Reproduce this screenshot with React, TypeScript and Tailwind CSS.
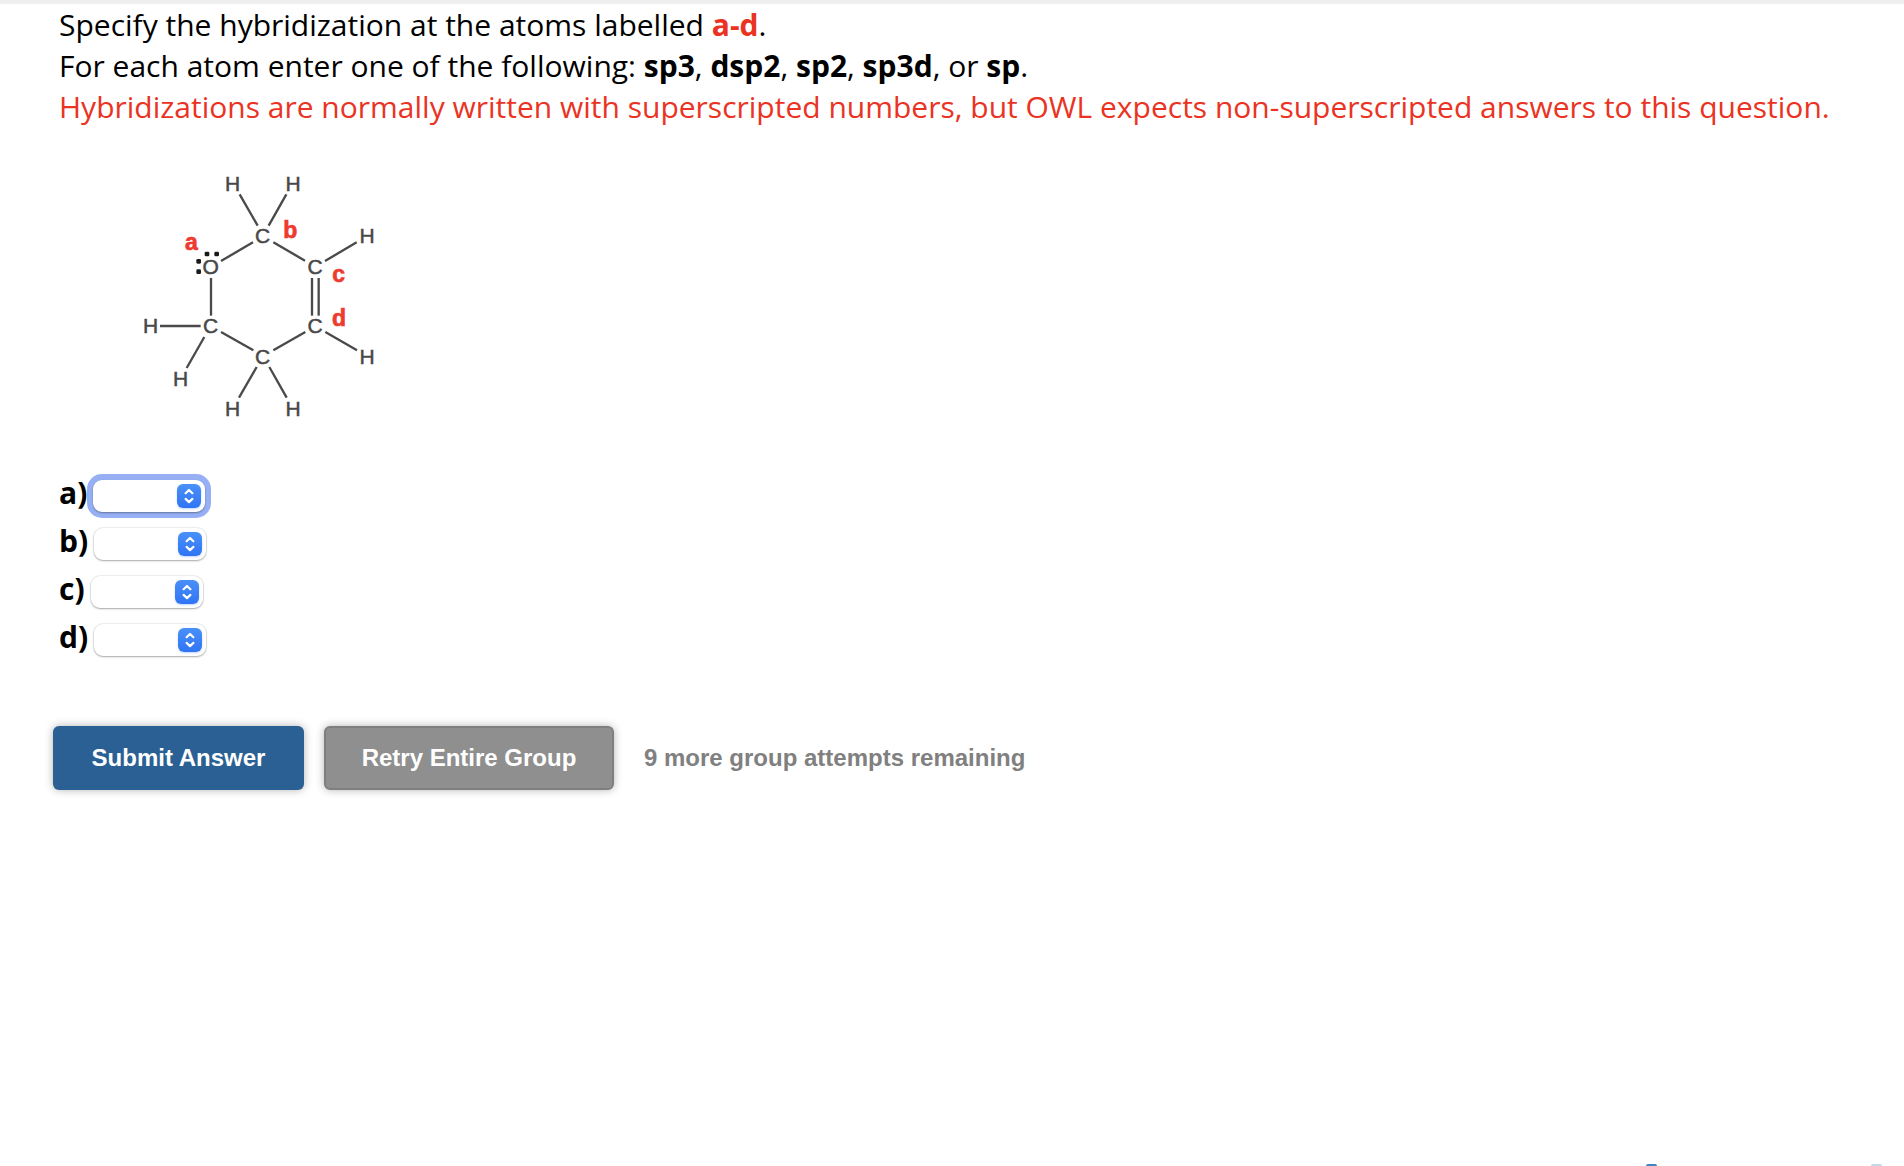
const bonds: number[][] = [
  [329, 103, 383, 197],
  [469, 103, 416, 197],
  [369, 247, 273, 303],
  [430, 247, 525, 302],
  [585, 303, 680, 247],
  [243, 354, 243, 467],
  [546, 354, 546, 467],
  [566, 354, 566, 467],
  [90, 498, 212, 498],
  [273, 516, 370, 571],
  [526, 516, 430, 571],
  [586, 516, 681, 571],
  [223, 531, 170, 624],
  [380, 621, 327, 713],
  [418, 621, 470, 713],
];

const atoms: [string, number, number][] = [
  ["H", 308, 93],
  ["H", 489, 93],
  ["C", 398, 250],
  ["H", 711, 250],
  ["O", 242, 341],
  ["C", 555, 341],
  ["H", 62, 520],
  ["C", 242, 520],
  ["C", 555, 520],
  ["C", 398, 611],
  ["H", 711, 611],
  ["H", 152, 677],
  ["H", 308, 767],
  ["H", 489, 767],
];

const marks: [string, number, number][] = [
  ["a", 184, 270],
  ["b", 481, 234],
  ["c", 626, 366],
  ["d", 627, 498],
];

const lonePairs: [number, number][] = [
  [231, 282],
  [260, 282],
  [206, 304],
  [206, 335],
];

function Molecule() {
  return (
    <svg
      role="img"
      aria-label="Structure with atoms labelled a to d"
      viewBox="0 0 780 810"
      className="ml-[71px] h-[270px] w-[260px] font-['Liberation_Sans']"
    >
      <g stroke="#4a4a4a" strokeWidth="7">
        {bonds.map(([x1, y1, x2, y2], i) => (
          <line key={i} x1={x1} y1={y1} x2={x2} y2={y2} />
        ))}
      </g>
      <g fill="#484848" stroke="#484848" strokeWidth="1.5" fontSize="63" textAnchor="middle">
        {atoms.map(([t, x, y], i) => (
          <text key={i} x={x} y={y}>{t}</text>
        ))}
      </g>
      <g fill="#ee3a2f" stroke="#ee3a2f" strokeWidth="2" fontSize="69" fontWeight="bold" textAnchor="middle">
        {marks.map(([t, x, y]) => (
          <text key={t} x={x} y={y}>{t}</text>
        ))}
      </g>
      <g fill="#1a1a1a">
        {lonePairs.map(([x, y], i) => (
          <rect key={i} x={x - 7} y={y - 7} width="14" height="14" rx="4" />
        ))}
      </g>
    </svg>
  );
}

const choices = ["sp3", "dsp2", "sp2", "sp3d", "sp"];

function AnswerRow({ name, focused }: { name: string; focused?: boolean }) {
  return (
    <div className="flex h-12 items-center">
      <label htmlFor={`atom-${name}`} className="-mt-1.5 text-[30px] leading-10 font-bold">
        {name})
      </label>
      <div className="relative ml-1.5">
        <select
          id={`atom-${name}`}
          defaultValue=""
          className={`block h-8 w-28 appearance-none rounded-[9px] bg-white px-2 text-lg outline-none ${
            focused
              ? "shadow-[0_1px_2px_rgba(0,0,0,0.35),0_0_0_6px_#97b0f5]"
              : "shadow-[0_0_0_1px_rgba(0,0,0,0.06),0_1px_2px_rgba(0,0,0,0.3)]"
          }`}
        >
          <option value=""></option>
          {choices.map((c) => (
            <option key={c}>{c}</option>
          ))}
        </select>
        <span className="pointer-events-none absolute top-1 right-1 flex size-6 rounded-md bg-linear-to-b from-[#4a90f8] to-[#3074f4] shadow-[0_1px_2px_rgba(48,116,244,0.3)]">
          <svg viewBox="0 0 24 24" className="size-6" fill="none" stroke="white" strokeWidth="2.2" strokeLinecap="round" strokeLinejoin="round">
            <path d="M8.6 9.2 12 6 15.4 9.2M8.6 14.9 12 18.1 15.4 14.9" />
          </svg>
        </span>
      </div>
    </div>
  );
}

export default function App() {
  return (
    <div className="flex min-h-screen flex-col border-t-4 border-[#efefef] bg-white font-['Open_Sans',sans-serif] text-black">
      <main className="pl-[59px]">
        <div className="text-[30px] leading-[41px]">
          <p>
            Specify the hybridization at the atoms labelled <b className="text-[#ea3323]">a-d</b>.
          </p>
          <p>
            For each atom enter one of the following: <b>sp3</b>, <b>dsp2</b>, <b>sp2</b>, <b>sp3d</b>, or <b>sp</b>.
          </p>
          <p className="text-[#ea3323]">
            Hybridizations are normally written with superscripted numbers, but OWL expects non-superscripted answers to this question.
          </p>
        </div>
        <div className="mt-[33px]">
          <Molecule />
        </div>
        <form className="mt-[42px]">
          <AnswerRow name="a" focused />
          <AnswerRow name="b" />
          <AnswerRow name="c" />
          <AnswerRow name="d" />
          <div className="mt-[62px] -ml-1.5 flex items-center font-['Liberation_Sans',sans-serif] text-2xl font-bold">
            <button type="button" className="h-16 w-[251px] rounded-md bg-[#2a6093] text-white shadow-[0_0_8px_rgba(0,0,0,0.3)]">
              Submit Answer
            </button>
            <button type="button" className="ml-5 h-16 w-[290px] rounded-md border-2 border-[#7f7f7f] bg-[#8f8f8f] text-white shadow-[0_0_8px_rgba(0,0,0,0.3)]">
              Retry Entire Group
            </button>
            <span className="ml-[30px] text-[#808080]">9 more group attempts remaining</span>
          </div>
        </form>
      </main>
      <div className="mt-auto flex justify-end gap-[214px] pr-[22px]">
        <span className="h-0.5 w-[11px] rounded-t-sm bg-[#3f86c0]" />
        <span className="h-0.5 w-[11px] rounded-t-sm bg-[#c3d8ea]" />
      </div>
    </div>
  );
}
